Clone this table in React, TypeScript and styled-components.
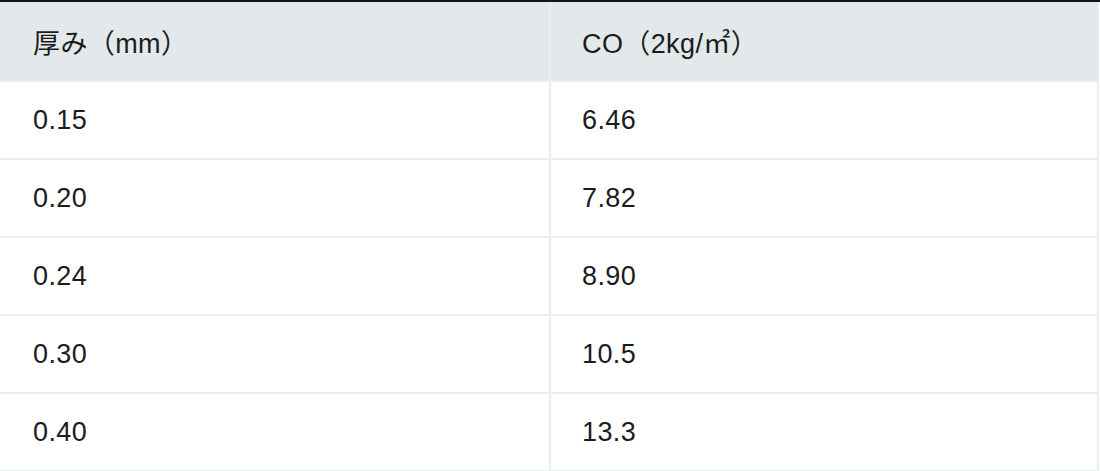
import React from "react";
import styled, { createGlobalStyle } from "styled-components";

const Global = createGlobalStyle`
  html, body { margin: 0; padding: 0; background: #ffffff; }
  body { font-family: "Liberation Sans", "Noto Sans CJK JP", sans-serif; }
`;

const Page = styled.div`
  width: 1100px;
  height: 471px;
  border-top: 2px solid #141414;
  box-sizing: border-box;
  background: #fff;
`;

const Table = styled.div`
  width: 1099px;
  display: grid;
  grid-template-columns: 549px 1fr;
  border-right: 2px solid #e9eded;
  border-bottom: 1px solid #e9eded;
  box-sizing: border-box;
`;

const Cell = styled.div<{ $head?: boolean; $first?: boolean }>`
  height: 78px;
  box-sizing: border-box;
  display: flex;
  align-items: center;
  padding-left: ${(p) => (p.$first ? "33px" : "31px")};
  padding-top: 1px;
  background: ${(p) => (p.$head ? "#e3e9ea" : "#ffffff")};
  border-left: ${(p) => (p.$first ? "none" : "2px solid #eaeeee")};
  border-top: ${(p) => (p.$head ? "none" : "2px solid #ececec")};
  font-size: 27px;
  color: #1c1c1c;
  letter-spacing: 0.4px;
  white-space: nowrap;
`;

const rows = [
  ["0.15", "6.46"],
  ["0.20", "7.82"],
  ["0.24", "8.90"],
  ["0.30", "10.5"],
  ["0.40", "13.3"],
];

export default function App() {
  return (
    <>
      <Global />
      <Page>
        <Table>
          <Cell $head $first>厚み（mm）</Cell>
          <Cell $head>CO（2kg/㎡）</Cell>
          {rows.map(([a, b]) => (
            <React.Fragment key={a}>
              <Cell $first>{a}</Cell>
              <Cell>{b}</Cell>
            </React.Fragment>
          ))}
        </Table>
      </Page>
    </>
  );
}
